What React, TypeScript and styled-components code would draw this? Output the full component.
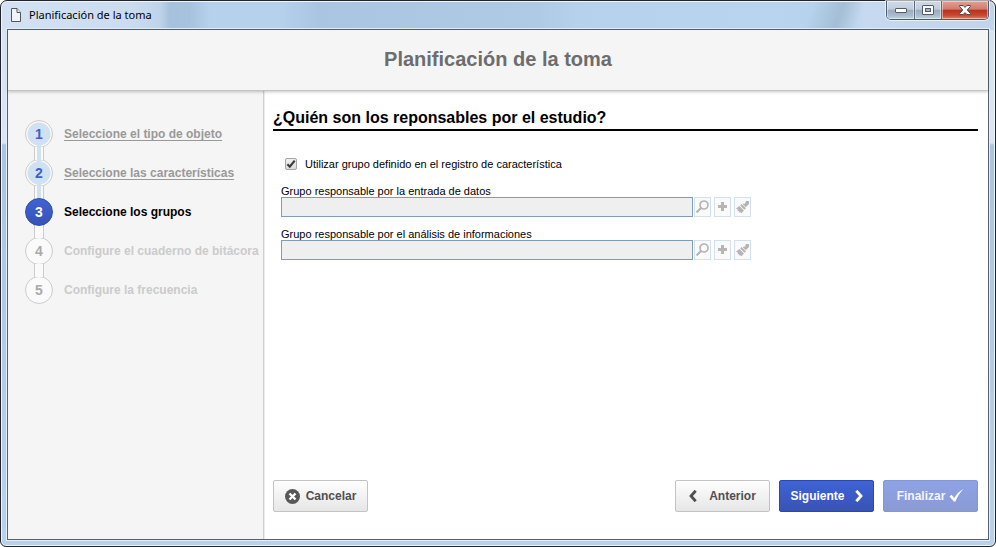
import React from 'react';
import styled, { createGlobalStyle, css } from 'styled-components';

const GlobalStyle = createGlobalStyle`
  *, *::before, *::after { box-sizing: border-box; }
  body { margin: 0; background: #fff; font-family: "Liberation Sans", Arial, sans-serif; font-size: 11px; color: #000; }
  button, input { font-family: inherit; }
`;

const Window = styled.div`
  display: flex;
  flex-direction: column;
  min-height: 100vh;
  padding: 0 6px 6px 6px;
  border: 1px solid #20242c;
  border-radius: 7px 7px 6px 6px;
  box-shadow: inset 0 0 0 1px #eef5fc;
  background:
    linear-gradient(110deg, transparent 81%, rgba(150, 178, 200, 0.6) 84%, transparent 86%) top / 100% 29px no-repeat,
    linear-gradient(90deg, #d3e2f3 0, #cbdcf0 13%, #bfd4eb 16%, #a6c1dc 17%, #a6c2de 19%, #b5d1ec 21%, #b5d1ec 28%, #a9c5e2 32%, #aecae4 54%, #b5d1ec 58%, #b8d4ee 78%, #b6d0ea 84%, #c6d9f0 87%, #c0d4eb 100%) top / 100% 29px no-repeat,
    linear-gradient(180deg, #d6e3f3 0, #dbe5f4 142px, #a9c5e3 144px, #b8d2ec 100%);
`;

const TitleBar = styled.header`
  display: flex;
  align-items: flex-start;
  height: 28px;
  padding-left: 4px;
`;

const Caption = styled.div`
  display: flex;
  flex: 1;
  align-items: center;
  gap: 8px;
  height: 27px;
  font: 11px/16px "Noto Sans", "Segoe UI", sans-serif;
`;

const WindowControls = styled.div`
  display: flex;
  height: 19px;
  border: 1px solid #4d5a6e;
  border-top: 0;
  border-radius: 0 0 5px 5px;
  overflow: hidden;
  box-shadow: 0 0 0 1px rgba(255, 255, 255, 0.6);
`;

const WindowButton = styled.button<{ $close?: boolean }>`
  display: flex;
  align-items: center;
  justify-content: center;
  width: ${(p) => (p.$close ? 47 : 27)}px;
  padding: 0;
  border: 0;
  box-shadow: inset 0 0 0 1px rgba(255, 255, 255, 0.45);
  background: ${(p) =>
    p.$close
      ? 'linear-gradient(#e0a296 0, #d27a6b 46%, #b8301b 50%, #c9492f 80%, #dc8564 100%)'
      : 'linear-gradient(#cfdbe8 0, #c0cddb 46%, #9aabbd 50%, #a9bbcd 80%, #c3d5e6 100%)'};
  & + & { border-left: 1px solid #5c6b80; }
`;

const Client = styled.div`
  display: flex;
  flex: 1;
  flex-direction: column;
  border: 1px solid #56616d;
  box-shadow: 0 0 0 1px #e4effa;
  background: #fff;
`;

const PageHeader = styled.div`
  position: relative;
  display: flex;
  align-items: center;
  justify-content: center;
  height: 61px;
  padding-bottom: 2px;
  border-bottom: 1px solid #c4c4c4;
  box-shadow: 0 1px 3px rgba(0, 0, 0, 0.22);
  background: #f5f5f5;
`;

const PageTitle = styled.h1`
  margin: 0;
  font-size: 20px;
  line-height: 24px;
  color: #6d6d6d;
`;

const Body = styled.div`
  display: flex;
  flex: 1;
`;

const Sidebar = styled.nav`
  flex: 0 0 256px;
  padding: 29px 0 0 17px;
  border-right: 1px solid #cfcfcf;
  box-shadow: 1px 0 0 #ececec;
  background: #f5f5f5;
`;

const Steps = styled.ol`
  display: flex;
  flex-direction: column;
  gap: 11px;
  margin: 0;
  padding: 0;
  list-style: none;
`;

type StepState = 'done' | 'current' | 'pending';

const labelColor = { done: '#999', current: '#000', pending: '#cbcbcb' };

const Step = styled.li<{ $state: StepState }>`
  position: relative;
  display: flex;
  align-items: center;
  gap: 11px;
  height: 28px;
  font-size: 12px;
  font-weight: bold;
  line-height: 14px;
  white-space: nowrap;
  color: ${(p) => labelColor[p.$state]};

  a { color: inherit; text-underline-offset: 2px; }

  &:not(:last-child)::after {
    content: '';
    position: absolute;
    z-index: 1;
    top: 27px;
    left: 9px;
    width: 10px;
    height: 13px;
    border: solid #ccc;
    border-width: 0 1px;
    background: #fafafa;
  }

  ${(p) =>
    p.$state === 'done' &&
    css`
      &::before {
        content: '';
        position: absolute;
        z-index: 2;
        top: 24px;
        left: 12px;
        width: 4px;
        height: 19px;
        background: #d0e2f2;
      }
    `}
`;

const Marker = styled.span<{ $state: StepState }>`
  display: flex;
  align-items: center;
  justify-content: center;
  width: 28px;
  height: 28px;
  border: 1px solid #ccc;
  border-radius: 50%;
  background: #fafafa;
  font-size: 14px;
  line-height: 16px;
  color: #aaa;

  ${(p) =>
    p.$state === 'done' &&
    css`
      background: radial-gradient(circle, #d0e2f2 0 11px, #fafafa 12px);
      color: #3f5fcc;
    `}
  ${(p) =>
    p.$state === 'current' &&
    css`
      position: relative;
      z-index: 3;
      border-color: #2f4ca8;
      background: linear-gradient(#3f63d6, #3753b4);
      color: #fff;
    `}
`;

const Content = styled.main`
  display: flex;
  flex: 1;
  flex-direction: column;
  padding: 18px 10px 27px 9px;
`;

const Question = styled.h2`
  margin: 0 0 26px;
  padding-bottom: 2px;
  border-bottom: 2px solid #000;
  font-size: 16px;
  line-height: 18px;
`;

const CheckRow = styled.label`
  display: flex;
  align-items: center;
  gap: 8px;
  height: 14px;
  margin: 0 0 14px 12px;
`;

const CheckBox = styled.span`
  position: relative;
  display: flex;
  width: 12px;
  height: 12px;

  input {
    appearance: none;
    width: 12px;
    height: 12px;
    margin: 0;
    border: 1px solid #a6a6a6;
    border-radius: 2px;
    background: linear-gradient(#f0f0f0, #dcdcdc);
  }
  svg { position: absolute; top: 0; left: 0; pointer-events: none; visibility: hidden; }
  input:checked + svg { visibility: visible; }
`;

const Field = styled.div`
  display: flex;
  flex-direction: column;
  margin: 0 0 11px 8px;
  line-height: 12px;
`;

const FieldRow = styled.div`
  display: flex;
`;

const TextBox = styled.input`
  flex: 0 1 412px;
  min-width: 0;
  height: 20px;
  margin-right: 1px;
  padding: 0 4px;
  border: 1px solid #7f9db9;
  background: #efefef;
  font-size: 11px;
`;

const ToolButton = styled.button`
  display: flex;
  align-items: center;
  justify-content: center;
  width: 17px;
  height: 20px;
  padding: 0;
  border: 1px solid #d5e0ed;
  background: #fafafa;
  & + & { margin-left: 3px; }
`;

const Footer = styled.footer`
  display: flex;
  gap: 9px;
  margin-top: auto;
`;

const Spacer = styled.div`
  flex: 1;
`;

type Tone = 'plain' | 'primary' | 'faded';

const tones = {
  plain: css`border-color: #c3c3c3; background: linear-gradient(#fefefe, #e6e6e6); color: #505050;`,
  primary: css`border-color: #2b48ae; background: linear-gradient(#3f63d6, #3753b4); color: #fff;`,
  faded: css`border-color: #8796cf; background: linear-gradient(#8ea2e6, #8a9ad4); color: #f2f4fd;`,
};

const ActionButton = styled.button<{ $tone: Tone; $gap: number }>`
  display: flex;
  align-items: center;
  justify-content: center;
  gap: ${(p) => p.$gap}px;
  width: 95px;
  height: 32px;
  padding: 0;
  border: 1px solid;
  border-radius: 2px;
  font-size: 12px;
  font-weight: bold;
  line-height: 14px;
  ${(p) => tones[p.$tone]}
`;

const steps: { label: string; state: StepState }[] = [
  { label: 'Seleccione el tipo de objeto', state: 'done' },
  { label: 'Seleccione las características', state: 'done' },
  { label: 'Seleccione los grupos', state: 'current' },
  { label: 'Configure el cuaderno de bitácora', state: 'pending' },
  { label: 'Configure la frecuencia', state: 'pending' },
];

const fields = [
  { id: 'entrada', label: 'Grupo responsable por la entrada de datos' },
  { id: 'analisis', label: 'Grupo responsable por el análisis de informaciones' },
];

const SearchIcon = () => (
  <svg width="13" height="14" viewBox="0 0 13 14" fill="none" stroke="#b5b5b5">
    <circle cx="8" cy="5" r="4" strokeWidth="1.7" />
    <path d="M5 8 1.2 11.800" strokeWidth="2.2" strokeLinecap="round" />
  </svg>
);

const PlusIcon = () => (
  <svg width="9" height="10" viewBox="0 0 9 10">
    <path d="M3 0h3v3h3v3H6v3H3V6H0V3h3z" fill="#b5b5b5" />
  </svg>
);

const BrushIcon = () => (
  <svg width="13" height="14" viewBox="0 0 13 14" fill="#b5b5b5">
    <path d="M10 1h3v3L9.700 7.200 6.800 4.300 8 3.400 8.700 4z" />
    <path d="M5.600 3.900 10 8.300 8.400 9.700 4.100 5.400z" />
    <path d="M3.400 5.900 7.900 10.400 5.500 13.300 4.300 12.300 3.600 12.700 2.900 11.300 1.600 11 1.800 9.600 0 8.500z" />
  </svg>
);

export default function App() {
  return (
    <>
      <GlobalStyle />
      <Window>
        <TitleBar>
          <Caption>
            <svg width="10" height="14" viewBox="0 0 10 14" fill="#eef4fa" stroke="#555" strokeWidth="1">
              <path d="M.5.5h5.500l3.500 4v9h-9z" />
              <path d="M6 .5v4h3.500" />
            </svg>
            <span>Planificación de la toma</span>
          </Caption>
          <WindowControls>
            <WindowButton type="button" aria-label="Minimizar">
              <svg width="12" height="5" viewBox="0 0 12 5"><rect x=".5" y=".5" width="11" height="4" rx=".5" fill="#fff" stroke="#555c69" /></svg>
            </WindowButton>
            <WindowButton type="button" aria-label="Maximizar">
              <svg width="12" height="10" viewBox="0 0 12 10" stroke="#555c69">
                <rect x=".5" y=".5" width="11" height="9" rx=".5" fill="#fff" />
                <rect x="3.5" y="3.5" width="5" height="3" fill="#a5b6c8" />
              </svg>
            </WindowButton>
            <WindowButton type="button" aria-label="Cerrar" $close>
              <svg width="12" height="10" viewBox="0 0 12 10">
                <path d="M.6.5h3.600L6 2.400 7.800.5h3.600v1L8.200 5l3.200 3.500v1H7.800L6 7.600 4.200 9.500H.6v-1L3.800 5 .6 1.500z" fill="#fff" stroke="#5a4650" strokeLinejoin="round" />
              </svg>
            </WindowButton>
          </WindowControls>
        </TitleBar>
        <Client>
          <PageHeader>
            <PageTitle>Planificación de la toma</PageTitle>
          </PageHeader>
          <Body>
            <Sidebar>
              <Steps>
                {steps.map((step, i) => (
                  <Step key={step.label} $state={step.state} aria-current={step.state === 'current' ? 'step' : undefined}>
                    <Marker $state={step.state}>{i + 1}</Marker>
                    {step.state === 'done' ? <a href="#paso">{step.label}</a> : <span>{step.label}</span>}
                  </Step>
                ))}
              </Steps>
            </Sidebar>
            <Content>
              <Question>¿Quién son los reponsables por el estudio?</Question>
              <CheckRow>
                <CheckBox>
                  <input type="checkbox" defaultChecked />
                  <svg width="12" height="12" viewBox="0 0 12 12" fill="none" stroke="#3c3c3c" strokeWidth="2.2">
                    <path d="M2.400 6.200 4.800 8.700 9.700 2.600" />
                  </svg>
                </CheckBox>
                <span>Utilizar grupo definido en el registro de característica</span>
              </CheckRow>
              {fields.map((field) => (
                <Field key={field.id}>
                  <label htmlFor={field.id}>{field.label}</label>
                  <FieldRow>
                    <TextBox id={field.id} type="text" readOnly />
                    <ToolButton type="button" aria-label="Buscar"><SearchIcon /></ToolButton>
                    <ToolButton type="button" aria-label="Agregar"><PlusIcon /></ToolButton>
                    <ToolButton type="button" aria-label="Limpiar"><BrushIcon /></ToolButton>
                  </FieldRow>
                </Field>
              ))}
              <Footer>
                <ActionButton type="button" $tone="plain" $gap={6}>
                  <svg width="15" height="15" viewBox="0 0 15 15">
                    <circle cx="7.5" cy="7.5" r="7.5" fill="#585858" />
                    <path d="m4.500 4.500 6 6m0-6-6 6" stroke="#fff" strokeWidth="2.4" />
                  </svg>
                  Cancelar
                </ActionButton>
                <Spacer />
                <ActionButton type="button" $tone="plain" $gap={12}>
                  <svg width="8" height="12" viewBox="0 0 8 12" fill="none" stroke="#505050" strokeWidth="2.8">
                    <path d="M6.700.7 2 6l4.700 5.300" />
                  </svg>
                  Anterior
                </ActionButton>
                <ActionButton type="button" $tone="primary" $gap={10}>
                  Siguiente
                  <svg width="8" height="12" viewBox="0 0 8 12" fill="none" stroke="#fff" strokeWidth="2.8">
                    <path d="M1.300.7 6 6l-4.700 5.300" />
                  </svg>
                </ActionButton>
                <ActionButton type="button" $tone="faded" $gap={4}>
                  Finalizar
                  <svg width="15" height="14" viewBox="0 0 15 14" fill="#fff">
                    <path d="M.5 7.500 2.500 5.800 5.300 9C7.500 5 10.500 2 14.500 0 11 3.700 8.400 7.500 6.400 12.400H4.800z" />
                  </svg>
                </ActionButton>
              </Footer>
            </Content>
          </Body>
        </Client>
      </Window>
    </>
  );
}
